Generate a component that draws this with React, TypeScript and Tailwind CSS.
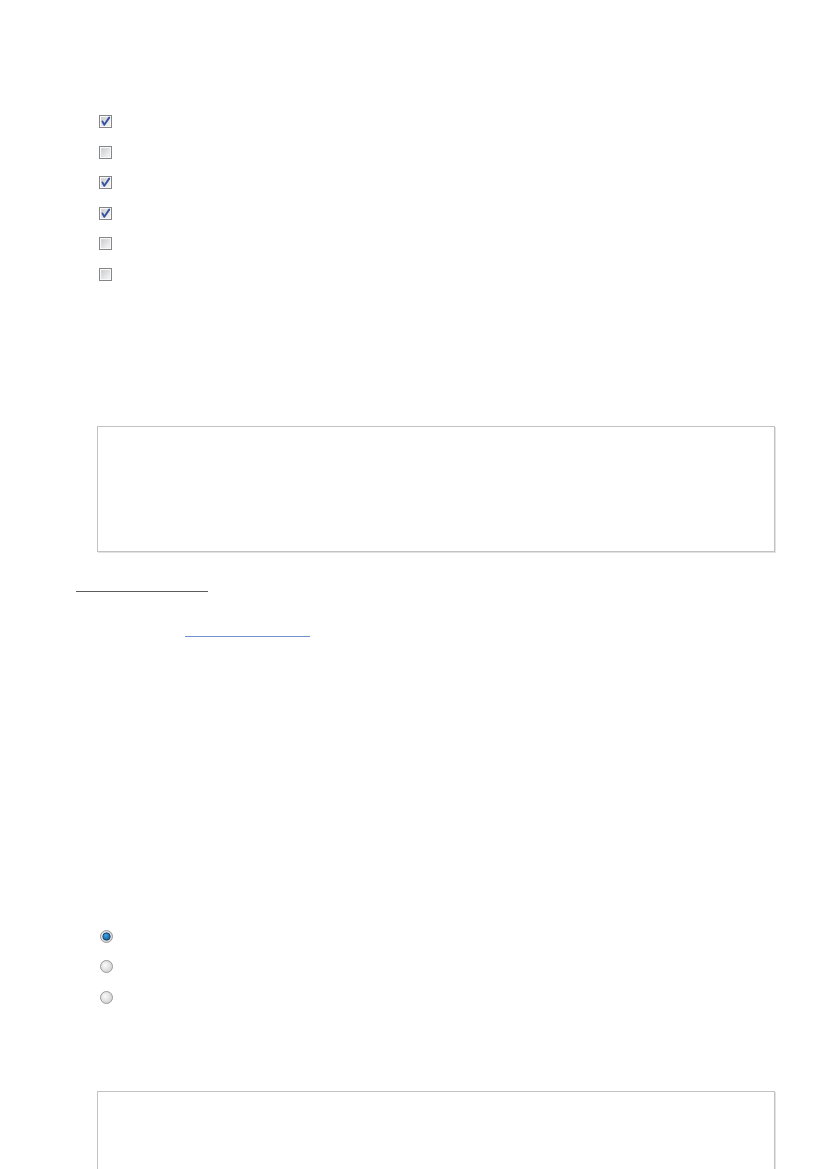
import React from "react";

const checks = [true, false, true, true, false, false];
const radios = [true, false, false];

function Checkbox({ checked }: { checked: boolean }) {
  return (
    <svg width="13" height="13" viewBox="0 0 13 13">
      <defs>
        <linearGradient id="cbFill" x1="0" y1="0" x2="1" y2="1">
          <stop offset="0" stopColor="#c9cacc" />
          <stop offset="1" stopColor="#f7f7f7" />
        </linearGradient>
      </defs>
      <rect x="0.5" y="0.5" width="12" height="12" fill="#fff" stroke="#858687" />
      <rect x="2" y="2" width="9" height="9" fill="url(#cbFill)" stroke="#e6e6e6" strokeWidth="0.6" />
      {checked && (
        <path
          d="M3.4 6.4 L5.3 9.8 L10.2 2.6"
          fill="none"
          stroke="#34509f"
          strokeWidth="1.9"
          strokeLinecap="round"
          strokeLinejoin="round"
        />
      )}
    </svg>
  );
}

function Radio({ checked }: { checked: boolean }) {
  return (
    <svg width="13" height="13" viewBox="0 0 13 13">
      <defs>
        <radialGradient id="rdFill" cx="0.4" cy="0.4" r="0.7">
          <stop offset="0" stopColor="#fafafa" />
          <stop offset="1" stopColor="#cdcdcd" />
        </radialGradient>
        <radialGradient id="rdDot" cx="0.4" cy="0.35" r="0.7">
          <stop offset="0" stopColor="#3fa4e6" />
          <stop offset="1" stopColor="#0d5a9c" />
        </radialGradient>
      </defs>
      <circle cx="6.5" cy="6.5" r="6" fill="url(#rdFill)" stroke="#999999" />
      {checked && <circle cx="6.5" cy="6.5" r="3.7" fill="url(#rdDot)" stroke="#1c3f66" strokeWidth="0.9" />}
    </svg>
  );
}

export default function App() {
  return (
    <div className="w-[827px] h-[1169px] overflow-hidden bg-white pl-[76px] pt-[115px] font-['Liberation_Sans',sans-serif]">
      {/* option list */}
      <div className="ml-[23px] flex flex-col">
        {checks.map((c, i) => (
          <div key={i} className="h-[30.6px] flex items-start">
            <Checkbox checked={c} />
          </div>
        ))}
      </div>

      {/* notes box */}
      <div className="ml-[21px] mt-[127px] w-[678px] h-[126px] border border-[#c2c2c2] shadow-[1px_1px_0_#e2e2e2]" />

      {/* links */}
      <div className="mt-[39px] w-[132px] border-b border-[#5c5c5c]" />
      <div className="ml-[109px] mt-[44px] w-[125px] border-b border-[#6f92cc]" />

      {/* choice list */}
      <div className="ml-[24px] mt-[293px] flex flex-col">
        {radios.map((r, i) => (
          <div key={i} className="h-[30.5px] flex items-start">
            <Radio checked={r} />
          </div>
        ))}
      </div>

      {/* second box */}
      <div className="ml-[21px] mt-[70px] w-[678px] h-[120px] border border-[#c2c2c2] shadow-[1px_1px_0_#e2e2e2]" />
    </div>
  );
}
